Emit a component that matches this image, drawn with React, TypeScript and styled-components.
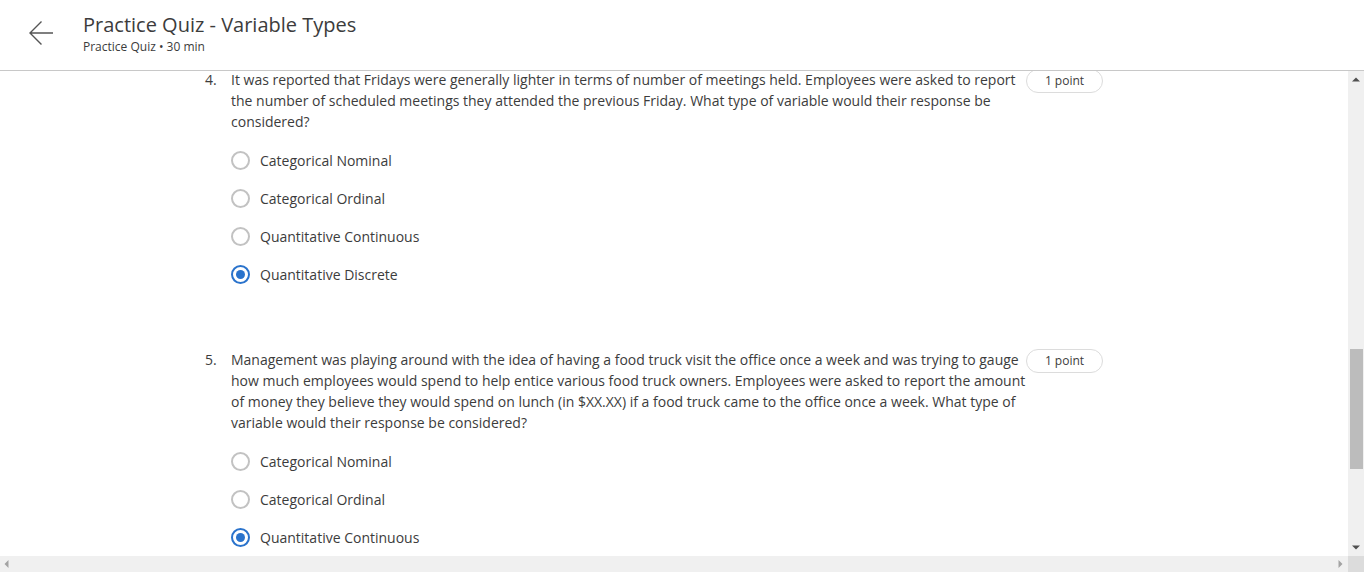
import React from "react";
import styled, { createGlobalStyle } from "styled-components";

const Global = createGlobalStyle`
  html, body { margin: 0; padding: 0; background: #fff; }
  body { font-family: "Open Sans", "Noto Sans", Arial, sans-serif; color: #373a3c; }
  * { box-sizing: border-box; }
`;

const Page = styled.div`
  width: 1364px;
  height: 572px;
  display: flex;
  flex-direction: column;
  overflow: hidden;
`;

const Header = styled.header`
  height: 71px;
  flex: none;
  border-bottom: 1px solid #c8c8c8;
  display: flex;
  align-items: flex-start;
  padding: 12px 0 0 26px;
`;

const BackButton = styled.button`
  width: 32px;
  height: 44px;
  border: 0;
  background: none;
  padding: 0;
  cursor: pointer;
  display: flex;
  align-items: center;
`;

const Titles = styled.div`
  margin-left: 25px;
  display: flex;
  flex-direction: column;
`;

const Title = styled.h1`
  margin: 0;
  font-size: 20px;
  font-weight: 400;
  line-height: 26px;
  color: #3c3c3c;
`;

const Subtitle = styled.div`
  font-size: 12px;
  line-height: 16px;
  margin-top: 1px;
  color: #3c3c3c;
`;

const Body = styled.div`
  flex: 1;
  display: flex;
  min-height: 0;
`;

const Main = styled.main`
  flex: 1;
  overflow: hidden;
  padding-left: 205px;
`;

const List = styled.div`
  margin-top: -2px;
  display: flex;
  flex-direction: column;
  gap: 56px;
`;

const Question = styled.section`
  display: grid;
  grid-template-columns: 26px 795px 77px;
  align-items: start;
`;

const Num = styled.div`
  font-size: 14px;
  line-height: 21px;
  color: #3c3c3c;
`;

const Prompt = styled.div`
  font-size: 14px;
  line-height: 21px;
  color: #3c3c3c;
`;

const Line = styled.span`
  display: block;
  white-space: nowrap;
`;

const Badge = styled.div`
  height: 24px;
  border: 1px solid #dcdcdc;
  border-radius: 12px;
  font-size: 12px;
  line-height: 22px;
  text-align: center;
  color: #3c3c3c;
`;

const Options = styled.div`
  grid-column: 2 / 3;
  margin-top: 9px;
  display: flex;
  flex-direction: column;
`;

const Option = styled.label`
  height: 38px;
  display: flex;
  align-items: center;
  gap: 10px;
  font-size: 14px;
  color: #3c3c3c;
`;

const Radio = styled.span<{ $checked?: boolean }>`
  width: 19px;
  height: 19px;
  border-radius: 50%;
  border: 2px solid ${(p) => (p.$checked ? "#2a73cc" : "#c2c2c2")};
  display: flex;
  align-items: center;
  justify-content: center;
  flex: none;
  &::after {
    content: "";
    width: 9px;
    height: 9px;
    border-radius: 50%;
    background: ${(p) => (p.$checked ? "#2a73cc" : "transparent")};
  }
`;

const VBar = styled.div`
  width: 16px;
  flex: none;
  background: #f0f0f0;
  display: flex;
  flex-direction: column;
  align-items: center;
`;

const ArrowBox = styled.div`
  height: 17px;
  width: 16px;
  flex: none;
  display: flex;
  align-items: center;
  justify-content: center;
`;

const VTrack = styled.div`
  flex: 1;
  width: 16px;
  padding: 261px 1px 0 2px;
`;

const Thumb = styled.div`
  width: 13px;
  height: 120px;
  background: #bcbcbc;
`;

const HBar = styled.div`
  height: 16px;
  flex: none;
  display: flex;
  background: #f0f0f0;
`;

const HTrack = styled.div`
  flex: 1;
  display: flex;
  align-items: center;
  justify-content: space-between;
  padding: 0 5px 0 4px;
`;

const Corner = styled.div`
  width: 16px;
  background: #dcdcdc;
`;

const Up = () => (
  <svg width="8" height="5" viewBox="0 0 8 5"><path d="M0 4.5 L4 0.5 L8 4.5 Z" fill="#505050" /></svg>
);
const Down = () => (
  <svg width="8" height="5" viewBox="0 0 8 5"><path d="M0 0.5 L4 4.5 L8 0.5 Z" fill="#505050" /></svg>
);
const Left = () => (
  <svg width="5" height="8" viewBox="0 0 5 8"><path d="M4.5 0 L0.5 4 L4.5 8 Z" fill="#a3a3a3" /></svg>
);
const Right = () => (
  <svg width="5" height="8" viewBox="0 0 5 8"><path d="M0.5 0 L4.5 4 L0.5 8 Z" fill="#a3a3a3" /></svg>
);

type Q = { n: number; lines: string[]; options: string[]; checked: number };

const questions: Q[] = [
  {
    n: 4,
    lines: [
      "It was reported that Fridays were generally lighter in terms of number of meetings held. Employees were asked to report",
      "the number of scheduled meetings they attended the previous Friday. What type of variable would their response be",
      "considered?",
    ],
    options: ["Categorical Nominal", "Categorical Ordinal", "Quantitative Continuous", "Quantitative Discrete"],
    checked: 3,
  },
  {
    n: 5,
    lines: [
      "Management was playing around with the idea of having a food truck visit the office once a week and was trying to gauge",
      "how much employees would spend to help entice various food truck owners. Employees were asked to report the amount",
      "of money they believe they would spend on lunch (in $XX.XX) if a food truck came to the office once a week. What type of",
      "variable would their response be considered?",
    ],
    options: ["Categorical Nominal", "Categorical Ordinal", "Quantitative Continuous"],
    checked: 2,
  },
];

export default function App() {
  return (
    <Page>
      <Global />
      <Header>
        <BackButton aria-label="Back">
          <svg width="28" height="28" viewBox="0 0 28 28">
            <path d="M4 13 H27 M15.5 1.5 L4 13 L15.5 24.5" stroke="#555" strokeWidth="1.4" fill="none" />
          </svg>
        </BackButton>
        <Titles>
          <Title>Practice Quiz - Variable Types</Title>
          <Subtitle>Practice Quiz • 30 min</Subtitle>
        </Titles>
      </Header>
      <Body>
        <Main>
          <List>
            {questions.map((q) => (
              <Question key={q.n}>
                <Num>{q.n}.</Num>
                <Prompt>
                  {q.lines.map((l, i) => (
                    <Line key={i}>{l}</Line>
                  ))}
                </Prompt>
                <Badge>1 point</Badge>
                <Options>
                  {q.options.map((o, i) => (
                    <Option key={o}>
                      <Radio $checked={i === q.checked} />
                      {o}
                    </Option>
                  ))}
                </Options>
              </Question>
            ))}
          </List>
        </Main>
        <VBar>
          <ArrowBox><Up /></ArrowBox>
          <VTrack><Thumb /></VTrack>
          <ArrowBox><Down /></ArrowBox>
        </VBar>
      </Body>
      <HBar>
        <HTrack>
          <Left />
          <Right />
        </HTrack>
        <Corner />
      </HBar>
    </Page>
  );
}
